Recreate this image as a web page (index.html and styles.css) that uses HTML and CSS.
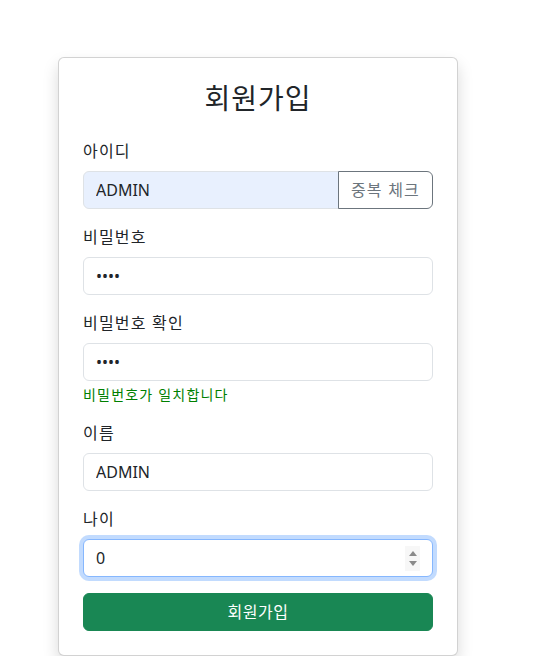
FILE: index.html
```html
<!DOCTYPE html>
<html lang="ko">
<head>
<meta charset="utf-8">
<title>회원가입</title>
<link rel="stylesheet" href="styles.css">
</head>
<body>
<div class="page">
  <div class="card">
    <h3 class="title">회원가입</h3>
    <form class="form">
      <div class="field">
        <label class="label">아이디</label>
        <div class="group">
          <input class="control autofill" type="text" value="ADMIN">
          <button type="button" class="btn-outline">중복 체크</button>
        </div>
      </div>
      <div class="field">
        <label class="label">비밀번호</label>
        <input class="control" type="password" value="1234">
      </div>
      <div class="field">
        <label class="label">비밀번호 확인</label>
        <input class="control" type="password" value="1234">
        <div class="feedback">비밀번호가 일치합니다</div>
      </div>
      <div class="field">
        <label class="label">이름</label>
        <input class="control" type="text" value="ADMIN">
      </div>
      <div class="field">
        <label class="label">나이</label>
        <div class="number-wrap">
          <input class="control focused" type="number" value="0">
          <span class="spin"><span class="up"></span><span class="down"></span></span>
        </div>
      </div>
      <button type="button" class="btn-submit">회원가입</button>
    </form>
  </div>
</div>
</body>
</html>
```
FILE: styles.css
```css
* { box-sizing: border-box; }
html, body { margin: 0; padding: 0; background: #fff; }
body {
  font-family: "Noto Sans", "Noto Sans CJK KR", sans-serif;
  font-size: 16px;
  line-height: 1.5;
  color: #212529;
}
.page {
  padding: 57px 0 0 58px;
}
.card {
  width: 400px;
  border: 1px solid rgba(0,0,0,0.175);
  border-radius: 6px;
  background: #fff;
  box-shadow: 0 8px 16px rgba(0,0,0,0.15);
  padding: 24px;
}
.title {
  margin: 0 0 24px;
  text-align: center;
  font-size: 28px;
  font-weight: 400;
  line-height: 33px;
  height: 33px;
  letter-spacing: 1px;
}
.field { margin-bottom: 16px; }
.label {
  display: block;
  margin-bottom: 8px;
  line-height: 24px;
  height: 24px;
  letter-spacing: 1.2px;
}
.control {
  display: block;
  width: 100%;
  height: 38px;
  padding: 6px 12px;
  font-family: inherit;
  font-size: 16px;
  line-height: 24px;
  color: #212529;
  background: #fff;
  border: 1px solid #dee2e6;
  border-radius: 6px;
  outline: none;
}
.autofill { background: #e8f0fe; }
.group { display: flex; }
.group .control {
  flex: 1;
  min-width: 0;
  border-top-right-radius: 0;
  border-bottom-right-radius: 0;
}
.btn-outline {
  height: 38px;
  padding: 6px 12px;
  font-family: inherit;
  font-size: 16px;
  line-height: 24px;
  letter-spacing: 1.2px;
  color: #6c757d;
  background: #fff;
  border: 1px solid #6c757d;
  border-radius: 0 6px 6px 0;
  margin-left: -1px;
}
.feedback {
  margin-top: 3px;
  font-size: 14px;
  line-height: 21px;
  letter-spacing: 1.2px;
  color: #008000;
}
.focused {
  border-color: #86b7fe;
  box-shadow: 0 0 0 4px rgba(13,110,253,0.25);
}
.number-wrap { position: relative; }
input[type=number]::-webkit-inner-spin-button,
input[type=number]::-webkit-outer-spin-button {
  -webkit-appearance: none;
  margin: 0;
}
.spin {
  position: absolute;
  right: 13px;
  top: 7px;
  width: 15px;
  height: 25px;
  background: #f7f7f7;
  display: flex;
  flex-direction: column;
  align-items: center;
  justify-content: center;
  gap: 5px;
}
.spin .up {
  width: 0; height: 0;
  border-left: 4px solid transparent;
  border-right: 4px solid transparent;
  border-bottom: 5px solid #8a8a8a;
}
.spin .down {
  width: 0; height: 0;
  border-left: 4px solid transparent;
  border-right: 4px solid transparent;
  border-top: 5px solid #8a8a8a;
}
.btn-submit {
  display: block;
  width: 100%;
  height: 38px;
  padding: 6px 12px;
  font-family: inherit;
  font-size: 16px;
  line-height: 24px;
  letter-spacing: 0.5px;
  color: #fff;
  background: #198754;
  border: 1px solid #198754;
  border-radius: 6px;
}
```
